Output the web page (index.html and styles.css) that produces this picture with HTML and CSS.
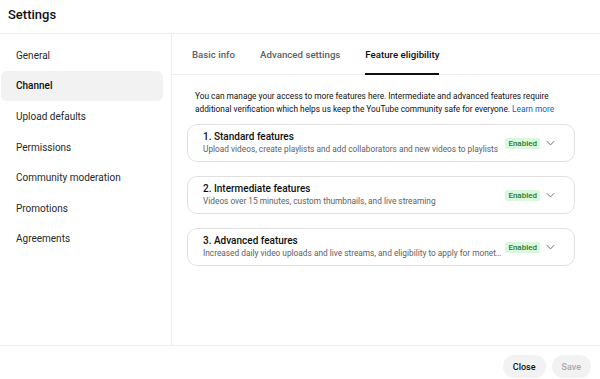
FILE: index.html
```html
<!DOCTYPE html>
<html lang="en">
<head>
    <meta charset="UTF-8">
    <meta name="viewport" content="width=device-width, initial-scale=1.0">
    <title>Settings</title>
    <link rel="stylesheet" href="styles.css">
</head>
<body>
    <div class="dialog">
        <header class="dialog-header">
            <h1>Settings</h1>
        </header>

        <div class="dialog-body">
            <nav class="sidebar">
                <div class="nav-item">General</div>
                <div class="nav-item active">Channel</div>
                <div class="nav-item">Upload defaults</div>
                <div class="nav-item">Permissions</div>
                <div class="nav-item">Community moderation</div>
                <div class="nav-item">Promotions</div>
                <div class="nav-item">Agreements</div>
            </nav>

            <main class="content">
                <div class="tabs">
                    <div class="tab">Basic info</div>
                    <div class="tab">Advanced settings</div>
                    <div class="tab selected">Feature eligibility</div>
                </div>

                <div class="panel">
                    <p class="intro">
                        You can manage your access to more features here. Intermediate and advanced features require
                        additional verification which helps us keep the YouTube community safe for everyone.
                        <a href="#">Learn more</a>
                    </p>

                    <div class="feature-card">
                        <div class="feature-text">
                            <div class="feature-title">1. Standard features</div>
                            <div class="feature-desc">Upload videos, create playlists and add collaborators and new videos to playlists</div>
                        </div>
                        <span class="badge">Enabled</span>
                        <svg class="chevron" viewBox="0 0 12 8"><path d="M1 1.5l5 5 5-5"/></svg>
                    </div>

                    <div class="feature-card">
                        <div class="feature-text">
                            <div class="feature-title">2. Intermediate features</div>
                            <div class="feature-desc">Videos over 15 minutes, custom thumbnails, and live streaming</div>
                        </div>
                        <span class="badge">Enabled</span>
                        <svg class="chevron" viewBox="0 0 12 8"><path d="M1 1.5l5 5 5-5"/></svg>
                    </div>

                    <div class="feature-card">
                        <div class="feature-text">
                            <div class="feature-title">3. Advanced features</div>
                            <div class="feature-desc">Increased daily video uploads and live streams, and eligibility to apply for monetization</div>
                        </div>
                        <span class="badge">Enabled</span>
                        <svg class="chevron" viewBox="0 0 12 8"><path d="M1 1.5l5 5 5-5"/></svg>
                    </div>
                </div>
            </main>
        </div>

        <footer class="dialog-footer">
            <button class="btn">Close</button>
            <button class="btn disabled">Save</button>
        </footer>
    </div>
</body>
</html>
```

FILE: styles.css
```css
body {
    margin: 0;
    font-family: Roboto, "Liberation Sans", Arial, sans-serif;
    color: #0f0f0f;
    background: #fff;
}

.dialog {
    width: 600px;
    height: 379px;
    display: flex;
    flex-direction: column;
}

.dialog-header {
    height: 33px;
    border-bottom: 1px solid #ececec;
    display: flex;
    align-items: center;
    padding-left: 8px;
}

.dialog-header h1 {
    margin: 0;
    font-size: 13px;
    font-weight: 500;
    position: relative;
    top: -2px;
}

.dialog-body {
    height: 311px;
    display: flex;
}

.sidebar {
    flex-shrink: 0;
    width: 172px;
    border-right: 1px solid #ececec;
    padding: 6px 8px 0 1px;
    box-sizing: border-box;
}

.nav-item {
    height: 30.6px;
    display: flex;
    align-items: center;
    padding-left: 15px;
    font-size: 10px;
    color: #282828;
    border-radius: 6px;
}

.nav-item.active {
    background: #f2f2f2;
    font-weight: 500;
    color: #0f0f0f;
}

.content {
    flex: 1;
    min-width: 0;
    display: flex;
    flex-direction: column;
}

.tabs {
    height: 40px;
    border-bottom: 1px solid #ececec;
    display: flex;
    gap: 25px;
    padding-left: 20px;
}

.tab {
    display: flex;
    align-items: center;
    padding-top: 1px;
    font-size: 9.7px;
    font-weight: 500;
    color: #606060;
    border-bottom: 2px solid transparent;
    box-sizing: border-box;
    margin-bottom: -1px;
}

.tab.selected {
    color: #0f0f0f;
    border-bottom-color: #0f0f0f;
}

.panel {
    padding: 15px 25px 0 15px;
}

.intro {
    margin: 0 0 8px;
    padding: 0 0 0 8px;
    font-size: 8.3px;
    line-height: 13px;
    color: #0f0f0f;
}

.intro a {
    color: #065fd4;
    text-decoration: none;
}

.feature-card {
    height: 38px;
    border: 1px solid #e0e0e0;
    border-radius: 10px;
    box-sizing: border-box;
    display: flex;
    align-items: center;
    padding: 0 19px 0 15px;
    margin-bottom: 14px;
}

.feature-text {
    flex: 1;
    min-width: 0;
}

.feature-title {
    font-size: 10px;
    font-weight: 500;
    line-height: 13px;
    color: #0f0f0f;
}

.feature-desc {
    font-size: 8.3px;
    line-height: 13px;
    color: #606060;
    white-space: nowrap;
    overflow: hidden;
    text-overflow: ellipsis;
}

.badge {
    flex-shrink: 0;
    margin-left: 3px;
    padding: 0 3px;
    height: 11px;
    line-height: 11px;
    font-size: 8px;
    font-weight: 500;
    color: #1f7a37;
    background: #d9f8dc;
    border-radius: 2px;
}

.chevron {
    flex-shrink: 0;
    width: 9px;
    height: 6px;
    margin-left: 6px;
    fill: none;
    stroke: #606060;
    stroke-width: 1.2;
}

.dialog-footer {
    flex: 1;
    border-top: 1px solid #ececec;
    display: flex;
    justify-content: flex-end;
    align-items: flex-start;
    gap: 6px;
    padding: 9px 9px 0 0;
}

.btn {
    height: 23px;
    padding: 0 10px;
    border: none;
    border-radius: 12px;
    background: #f2f2f2;
    font-family: Roboto, "Liberation Sans", Arial, sans-serif;
    font-size: 9px;
    font-weight: 500;
    color: #0f0f0f;
    cursor: pointer;
}

.btn.disabled {
    color: #a8a8a8;
    cursor: default;
}
```
